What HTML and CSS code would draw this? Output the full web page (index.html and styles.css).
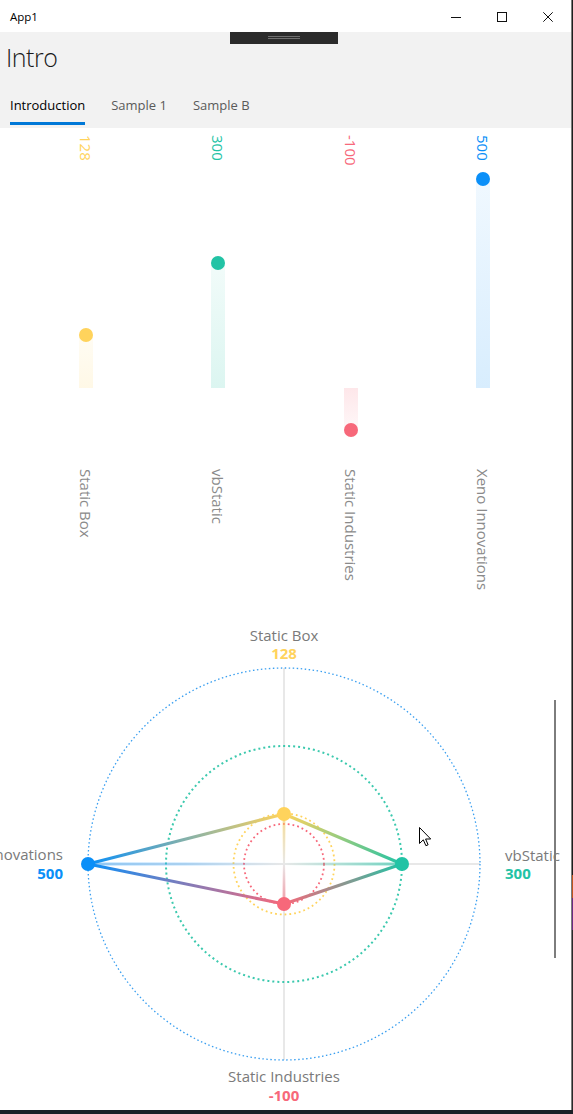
FILE: index.html
```html
<!DOCTYPE html>
<html lang="en">
<head>
<meta charset="utf-8">
<title>App1</title>
<link rel="stylesheet" href="styles.css">
</head>
<body>
<div class="screen">
  <div class="window">
    <header class="titlebar">
      <span class="app-name">App1</span>
      <div class="caption-buttons">
        <span class="cap-btn"><svg class="glyph" width="10" height="10" viewBox="0 0 10 10"><line x1="0" y1="5.5" x2="10" y2="5.5" stroke="#111" stroke-width="1"/></svg></span>
        <span class="cap-btn"><svg class="glyph" width="10" height="10" viewBox="0 0 10 10"><rect x="0.5" y="0.5" width="9" height="9" fill="none" stroke="#111" stroke-width="1"/></svg></span>
        <span class="cap-btn"><svg class="glyph" width="10" height="10" viewBox="0 0 10 10"><path d="M0.3 0.3 L9.7 9.7 M9.7 0.3 L0.3 9.7" stroke="#111" stroke-width="1"/></svg></span>
      </div>
    </header>

    <section class="page-header">
      <div class="debug-bar"><span class="grip"></span></div>
      <h1 class="page-title">Intro</h1>
      <nav class="tabs">
        <span class="tab active">Introduction</span>
        <span class="tab">Sample 1</span>
        <span class="tab">Sample B</span>
      </nav>
    </section>

    <main class="content">
      <svg class="bar-chart" width="571" height="482" viewBox="0 128 571 482">
        <defs>
          <linearGradient id="barY" x1="0" y1="0" x2="0" y2="1">
            <stop offset="0" stop-color="#ffd35c" stop-opacity="0.07"/>
            <stop offset="1" stop-color="#ffd35c" stop-opacity="0.15"/>
          </linearGradient>
          <linearGradient id="barG" x1="0" y1="0" x2="0" y2="1">
            <stop offset="0" stop-color="#22c3a5" stop-opacity="0.06"/>
            <stop offset="1" stop-color="#22c3a5" stop-opacity="0.16"/>
          </linearGradient>
          <linearGradient id="barR" x1="0" y1="0" x2="0" y2="1">
            <stop offset="0" stop-color="#f7687a" stop-opacity="0.16"/>
            <stop offset="1" stop-color="#f7687a" stop-opacity="0.05"/>
          </linearGradient>
          <linearGradient id="barB" x1="0" y1="0" x2="0" y2="1">
            <stop offset="0" stop-color="#0a8ff8" stop-opacity="0.06"/>
            <stop offset="1" stop-color="#0a8ff8" stop-opacity="0.16"/>
          </linearGradient>
        </defs>

        <text class="bar-value c-yellow" transform="translate(80 135) rotate(90)">128</text>
        <text class="bar-value c-green" transform="translate(212 135) rotate(90)">300</text>
        <text class="bar-value c-red" transform="translate(345 135) rotate(90)">-100</text>
        <text class="bar-value c-blue" transform="translate(477 135) rotate(90)">500</text>

        <rect x="79" y="335" width="14" height="53" fill="url(#barY)"/>
        <rect x="211" y="263" width="14" height="125" fill="url(#barG)"/>
        <rect x="344" y="388" width="14" height="42" fill="url(#barR)"/>
        <rect x="476" y="179" width="14" height="209" fill="url(#barB)"/>

        <circle cx="86" cy="335" r="7" fill="#ffd35c"/>
        <circle cx="218" cy="263" r="7" fill="#22c3a5"/>
        <circle cx="351" cy="430" r="7" fill="#f7687a"/>
        <circle cx="483" cy="179" r="7" fill="#0a8ff8"/>

        <text class="bar-name" transform="translate(80 469) rotate(90)">Static Box</text>
        <text class="bar-name" transform="translate(212 469) rotate(90)">vbStatic</text>
        <text class="bar-name" transform="translate(345 469) rotate(90)">Static Industries</text>
        <text class="bar-name" transform="translate(477 469) rotate(90)">Xeno Innovations</text>
      </svg>

      <svg class="radar-chart" width="571" height="500" viewBox="0 610 571 500">
        <defs>
          <linearGradient id="eYG" gradientUnits="userSpaceOnUse" x1="284" y1="814" x2="402" y2="864">
            <stop offset="0" stop-color="#ffd35c"/><stop offset="1" stop-color="#22c3a5"/>
          </linearGradient>
          <linearGradient id="eGR" gradientUnits="userSpaceOnUse" x1="402" y1="864" x2="284" y2="904">
            <stop offset="0" stop-color="#22c3a5"/><stop offset="1" stop-color="#f7687a"/>
          </linearGradient>
          <linearGradient id="eRB" gradientUnits="userSpaceOnUse" x1="284" y1="904" x2="88" y2="864">
            <stop offset="0" stop-color="#f7687a"/><stop offset="1" stop-color="#0a8ff8"/>
          </linearGradient>
          <linearGradient id="eBY" gradientUnits="userSpaceOnUse" x1="88" y1="864" x2="284" y2="814">
            <stop offset="0" stop-color="#0a8ff8"/><stop offset="1" stop-color="#ffd35c"/>
          </linearGradient>
          <linearGradient id="sY" gradientUnits="userSpaceOnUse" x1="284" y1="864" x2="284" y2="814">
            <stop offset="0" stop-color="#ffd35c" stop-opacity="0"/><stop offset="1" stop-color="#ffd35c" stop-opacity="0.6"/>
          </linearGradient>
          <linearGradient id="sG" gradientUnits="userSpaceOnUse" x1="284" y1="864" x2="402" y2="864">
            <stop offset="0" stop-color="#22c3a5" stop-opacity="0"/><stop offset="1" stop-color="#22c3a5" stop-opacity="0.6"/>
          </linearGradient>
          <linearGradient id="sR" gradientUnits="userSpaceOnUse" x1="284" y1="864" x2="284" y2="904">
            <stop offset="0" stop-color="#f7687a" stop-opacity="0"/><stop offset="1" stop-color="#f7687a" stop-opacity="0.6"/>
          </linearGradient>
          <linearGradient id="sB" gradientUnits="userSpaceOnUse" x1="284" y1="864" x2="88" y2="864">
            <stop offset="0" stop-color="#39a6ff" stop-opacity="0"/><stop offset="0.5" stop-color="#39a6ff" stop-opacity="0.35"/><stop offset="1" stop-color="#39a6ff" stop-opacity="0.5"/>
          </linearGradient>
        </defs>

        <line x1="284" y1="668" x2="284" y2="1060" stroke="#e8e8e8" stroke-width="2"/>
        <line x1="88" y1="864" x2="480" y2="864" stroke="#e8e8e8" stroke-width="2"/>

        <circle cx="284" cy="864" r="196" fill="none" stroke="#3a9ff0" stroke-width="1.3" stroke-dasharray="1.5 2.5"/>
        <circle cx="284" cy="864" r="118" fill="none" stroke="#3cc9ae" stroke-width="2" stroke-dasharray="2 3"/>
        <circle cx="284" cy="864" r="50.5" fill="none" stroke="#ffd35c" stroke-width="1.8" stroke-dasharray="1.8 3"/>
        <circle cx="284" cy="864" r="40" fill="none" stroke="#f7687a" stroke-width="1.8" stroke-dasharray="1.8 3"/>

        <line x1="284" y1="864" x2="284" y2="814" stroke="url(#sY)" stroke-width="3"/>
        <line x1="284" y1="864" x2="402" y2="864" stroke="url(#sG)" stroke-width="3"/>
        <line x1="284" y1="864" x2="284" y2="904" stroke="url(#sR)" stroke-width="3"/>
        <line x1="284" y1="864" x2="88" y2="864" stroke="url(#sB)" stroke-width="3"/>

        <line x1="284" y1="814" x2="402" y2="864" stroke="url(#eYG)" stroke-width="3"/>
        <line x1="402" y1="864" x2="284" y2="904" stroke="url(#eGR)" stroke-width="3"/>
        <line x1="284" y1="904" x2="88" y2="864" stroke="url(#eRB)" stroke-width="3"/>
        <line x1="88" y1="864" x2="284" y2="814" stroke="url(#eBY)" stroke-width="3"/>

        <circle cx="284" cy="814" r="7" fill="#ffd35c"/>
        <circle cx="402" cy="864" r="7" fill="#22c3a5"/>
        <circle cx="284" cy="904" r="7" fill="#f7687a"/>
        <circle cx="88" cy="864" r="7" fill="#0a8ff8"/>

        <text class="radar-name" x="284" y="641" text-anchor="middle">Static Box</text>
        <text class="radar-value c-yellow" x="284" y="659" text-anchor="middle">128</text>
        <text class="radar-name" x="505" y="861">vbStatic</text>
        <text class="radar-value c-green" x="505" y="879">300</text>
        <text class="radar-name" x="63" y="860" text-anchor="end">Xeno Innovations</text>
        <text class="radar-value c-blue" x="63" y="879" text-anchor="end">500</text>
        <text class="radar-name" x="284" y="1082" text-anchor="middle">Static Industries</text>
        <text class="radar-value c-red" x="284" y="1101" text-anchor="middle">-100</text>
      </svg>

      <div class="scroll-indicator"></div>
      <svg class="cursor" width="13" height="20" viewBox="0 0 13 20">
        <path d="M0.5 0.5 L0.5 16.5 L4.3 12.8 L6.9 18.7 L9.1 17.8 L6.6 12 L11.7 12 Z" fill="#fff" stroke="#000" stroke-width="1" stroke-linejoin="round"/>
      </svg>
    </main>
  </div>
  <div class="desktop-edge"></div>
</div>
<div class="taskbar-edge"></div>
</body>
</html>
```

FILE: styles.css
```css
* { box-sizing: border-box; }

html, body {
  margin: 0;
  padding: 0;
}

body {
  width: 573px;
  height: 1114px;
  overflow: hidden;
  background: #1b2027;
  font-family: "Open Sans", "Noto Sans", sans-serif;
  color: #111;
}

.screen {
  display: flex;
  height: 1110px;
}

.window {
  width: 572px;
  display: flex;
  flex-direction: column;
  background: #fff;
  border-right: 1px solid #7c7c7c;
  overflow: hidden;
}

.desktop-edge {
  flex: 1;
  background: linear-gradient(to bottom,
    #1e1e1e 0, #1e1e1e 875px,
    #c0531c 875px, #c0531c 898px,
    #6b2b82 898px, #6b2b82 930px,
    #2a2a2a 930px, #2a2a2a 100%);
}

.taskbar-edge {
  height: 4px;
  background: #1b2027;
}

/* title bar */
.titlebar {
  height: 32px;
  flex: none;
  display: flex;
  align-items: center;
  justify-content: space-between;
  background: #fff;
}

.app-name {
  padding-left: 10px;
  font-size: 11.5px;
  color: #000;
}

.caption-buttons {
  display: flex;
  height: 100%;
}

.cap-btn {
  width: 46px;
  height: 100%;
  display: flex;
  align-items: center;
  justify-content: center;
  padding-top: 2px;
}

.glyph { display: block; }

/* page header */
.page-header {
  position: relative;
  flex: none;
  height: 96px;
  padding-top: 7px;
  background: #f2f2f2;
}

.debug-bar {
  position: absolute;
  left: 230px;
  top: 0;
  width: 108px;
  height: 12px;
  background: #2b2b2b;
}

.grip {
  position: absolute;
  left: 38px;
  top: 4px;
  width: 32px;
  height: 3px;
  border-top: 1px solid #6e6e6e;
  border-bottom: 1px solid #6e6e6e;
}

.page-title {
  margin: 0;
  padding-left: 6px;
  font-size: 25px;
  font-weight: 300;
  letter-spacing: -0.5px;
  line-height: 36px;
  color: #1a1a1a;
}

.tabs {
  display: flex;
  gap: 26px;
  margin-top: 20px;
  padding-left: 10px;
}

.tab {
  font-size: 13px;
  line-height: 20px;
  padding-bottom: 7px;
  border-bottom: 3px solid transparent;
  color: #5a5a5a;
}

.tab.active {
  color: #000;
  border-bottom-color: #0078d7;
}

/* content */
.content {
  position: relative;
  flex: 1;
  display: flex;
  flex-direction: column;
  background: #fff;
}

.bar-chart,
.radar-chart {
  display: block;
  flex: none;
}

.bar-value {
  font-family: "Open Sans", "Noto Sans", sans-serif;
  font-size: 15px;
}

.bar-name {
  font-family: "Open Sans", "Noto Sans", sans-serif;
  font-size: 15px;
  fill: #8a8a8a;
}

.radar-name {
  font-family: "Open Sans", "Noto Sans", sans-serif;
  font-size: 15px;
  fill: #7a7a7a;
}

.radar-value {
  font-family: "Open Sans", "Noto Sans", sans-serif;
  font-size: 15px;
  font-weight: 700;
}

.c-yellow { fill: #ffd35c; }
.c-green { fill: #22c3a5; }
.c-red { fill: #f7687a; }
.c-blue { fill: #0a8ff8; }

.scroll-indicator {
  position: absolute;
  left: 554px;
  top: 572px;
  width: 2px;
  height: 258px;
  background: #7d7d7d;
}

.cursor {
  position: absolute;
  left: 419px;
  top: 699px;
}
```
